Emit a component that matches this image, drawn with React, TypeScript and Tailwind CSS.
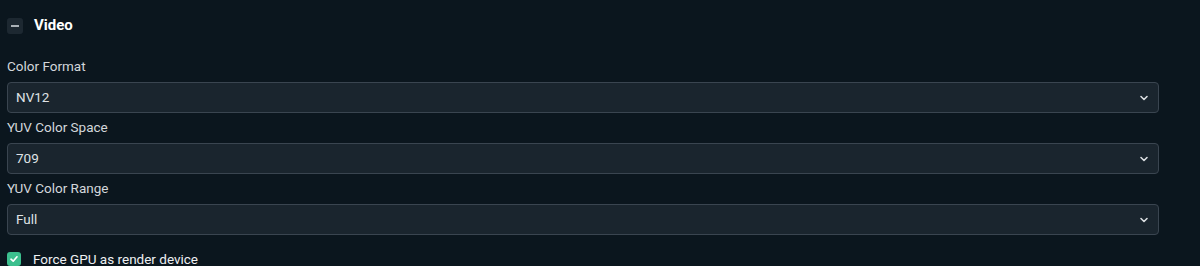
import type React from "react"

const ChevronDown = () => (
  <svg width="10" height="10" viewBox="0 0 10 10" fill="none">
    <path d="M2 3.5 L5 6.5 L8 3.5" stroke="#d9dde0" strokeWidth="1.6" strokeLinecap="round" strokeLinejoin="round" />
  </svg>
)

const SelectField: React.FC<{ label: string; value: string }> = ({ label, value }) => (
  <div className="flex flex-col">
    <label className="h-[20px] text-[13.5px] leading-[20px] text-[#d3d7db]">{label}</label>
    <div className="mt-[6px] flex h-[31px] items-center justify-between rounded-[4px] border border-[#3a4550] bg-[#1a252e] pl-[8px] pr-[9px]">
      <span className="text-[13.5px] text-[#dfe2e5]">{value}</span>
      <ChevronDown />
    </div>
  </div>
)

export default function App() {
  return (
    <div
      className="h-[266px] w-[1200px] overflow-hidden bg-[#0b161e] pl-[7px] pr-[41px]"
      style={{ fontFamily: "Roboto, 'Noto Sans', sans-serif" }}
    >
      <div className="flex h-[50px] items-center pt-[1px]">
        <div className="flex h-[16px] w-[16px] items-center justify-center rounded-[3px] bg-[#1d2831]">
          <div className="h-[2px] w-[8px] bg-[#aab1b7]" />
        </div>
        <span className="ml-[11px] text-[15px] font-bold text-white">Video</span>
      </div>
      <div className="flex flex-col gap-[4px] pt-[6px]">
        <SelectField label="Color Format" value="NV12" />
        <SelectField label="YUV Color Space" value="709" />
        <SelectField label="YUV Color Range" value="Full" />
      </div>
      <div className="mt-[14px] flex items-center">
        <div className="flex h-[14px] w-[14px] items-center justify-center rounded-[3px] bg-[#3cbf8e]">
          <svg width="10" height="10" viewBox="0 0 10 10" fill="none">
            <path d="M2 5.2 L4.2 7.2 L8 2.8" stroke="white" strokeWidth="1.7" strokeLinecap="round" strokeLinejoin="round" />
          </svg>
        </div>
        <span className="ml-[12px] text-[13.5px] text-[#eef0f2]">Force GPU as render device</span>
      </div>
    </div>
  )
}
